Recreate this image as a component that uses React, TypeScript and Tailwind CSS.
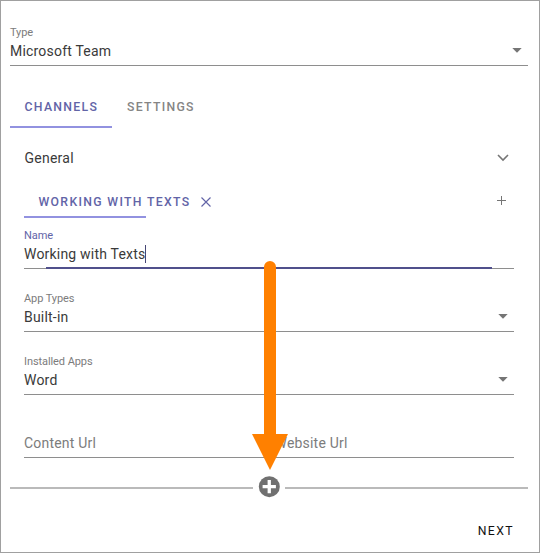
import React from "react";

function Caret() {
  return (
    <svg width="10" height="5" viewBox="0 0 10 5" className="mr-[6px] shrink-0">
      <path d="M.3 0h9.400L5 4.800z" fill="#757575" />
    </svg>
  );
}

function SelectField({ label, value }: { label: string; value: string }) {
  return (
    <div className="flex h-[42px] flex-col border-b border-[#8e8e8e] pt-[2px]">
      <span className="h-[14px] text-[11px] leading-[14px] tracking-[-0.08px] text-[#7c7c7c]">{label}</span>
      <div className="flex h-[20px] items-start justify-between">
        <span className="pt-px text-[14px] leading-[20px] tracking-[0.2px] text-[#3a3a3a]">{value}</span>
        <span className="pt-[8px]">
          <Caret />
        </span>
      </div>
    </div>
  );
}

export default function App() {
  return (
    <div className="relative flex h-[553px] w-[540px] flex-col border border-[#a0a0a0] bg-white px-[9px] pt-[23px] font-['Roboto',sans-serif]">
      <div className="mr-[2px] flex flex-col">
        <SelectField label="Type" value="Microsoft Team" />
      </div>

      <div className="mt-[20px] flex h-[42px] text-[12.25px] font-medium leading-[43px] tracking-[1.3px]">
        <div className="h-[42px] w-[102px] border-b-2 border-[#9292e0] pl-[14.5px] text-[#6264a7]">CHANNELS</div>
        <div className="pl-[15px] text-[#858585]">SETTINGS</div>
      </div>

      <div className="ml-[14px] mr-[16px] flex flex-col">
        <div className="flex h-[60px] items-center justify-between text-[14px] tracking-[0.25px] text-[#3a3a3a]">
          <span className="pl-[0.5px]">General</span>
          <svg width="12" height="8" viewBox="0 0 12 8" className="mr-[5px]" fill="none" stroke="#757575" strokeWidth="1.6">
            <path d="M1 1l5 5 5-5" />
          </svg>
        </div>

        <div className="flex h-[30px] justify-between">
          <div className="flex h-[30px] w-[122px] whitespace-nowrap border-b-2 border-[#9292e0] pl-[14.5px] text-[12.25px] font-medium leading-[28px] tracking-[1.32px] text-[#6264a7]">
            <span>WORKING WITH TEXTS</span>
            <svg width="10" height="10" viewBox="0 0 10 10" className="ml-[11px] mt-[9px] shrink-0" fill="none" stroke="#6264a7" strokeWidth="1.15">
              <path d="M.5.5l9 9M9.500.5l-9 9" />
            </svg>
          </div>
          <svg width="9" height="9" viewBox="0 0 9 9" className="mr-[8px] mt-[8px]" fill="none" stroke="#757575" strokeWidth="1">
            <path d="M0 4.500h9M4.500 0v9" />
          </svg>
        </div>

        <div className="mt-[11px] flex h-[40px] flex-col">
          <span className="h-[14px] text-[11px] leading-[14px] tracking-[-0.08px] text-[#6264a7]">Name</span>
          <div className="flex h-[24px] items-start text-[14px] leading-[20px] tracking-[0.2px] text-[#3a3a3a]">
            <span className="w-[121px] whitespace-nowrap pt-[1px]">Working with Texts</span>
            <span className="mt-[2px] h-[18px] w-px bg-[#464775]" />
          </div>
          <div className="flex h-[2px] items-end">
            <div className="h-px w-[22px] bg-[#8e8e8e]" />
            <div className="h-[2px] w-[446px] bg-[#50508c]" />
            <div className="h-px flex-1 bg-[#8e8e8e]" />
          </div>
        </div>

        <div className="mt-[21px]">
          <SelectField label="App Types" value="Built-in" />
        </div>
        <div className="mt-[21px]">
          <SelectField label="Installed Apps" value="Word" />
        </div>

        <div className="mt-[38px] grid h-[25px] grid-cols-2 border-b border-[#8e8e8e] text-[14px] leading-[20px] tracking-[0.2px] text-[#7c7c7c]">
          <span>Content Url</span>
          <span className="pl-[5.500px]">Website Url</span>
        </div>
      </div>

      <div className="mr-[2px] mt-[18px] flex h-[22px] items-center">
        <div className="mt-px h-[2px] w-[243px] bg-[#bababa]" />
        <svg width="22" height="22" viewBox="0 0 22 22" className="ml-[5px] mr-[5px]">
          <circle cx="11.300" cy="10.700" r="10.500" fill="#707070" />
          <path d="M9.600 4h3.300v5h5v3.300h-5v5h-3.300v-5h-5V9h5z" fill="white" />
        </svg>
        <div className="mt-px h-[2px] flex-1 bg-[#bababa]" />
      </div>

      <button className="mr-[16px] mt-[23px] self-end text-[12.25px] font-normal leading-[20px] tracking-[1.4px] text-[#111]">
        NEXT
      </button>

      <svg width="36" height="209" viewBox="0 0 36 209" className="absolute left-[251px] top-[260px]" fill="#ff8000">
        <path d="M12 6a6 6 0 0 1 12 0v167h12L18 209 0 173h12z" />
      </svg>
    </div>
  );
}
